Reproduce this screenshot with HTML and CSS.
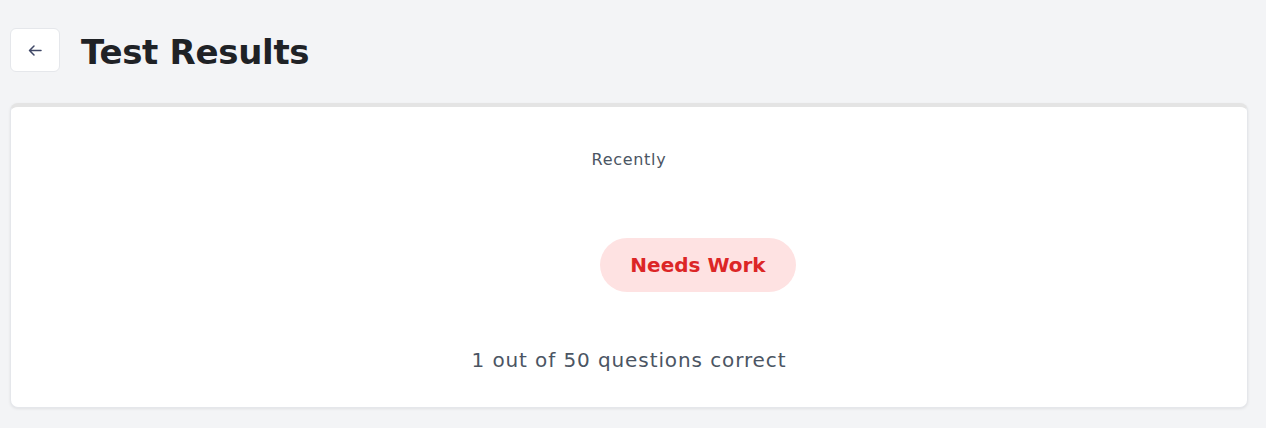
FILE: index.html
```html
<!DOCTYPE html>
<html lang="en">
<head>
<meta charset="utf-8">
<title>Test Results</title>
<link rel="stylesheet" href="styles.css">
</head>
<body>
  <header class="page-header">
    <button class="back-btn" aria-label="Back">
      <svg width="18" height="18" viewBox="0 0 18 18" fill="none" stroke="#3f4766" stroke-width="1.5" stroke-linecap="round" stroke-linejoin="round"><path d="M15 9.5H3.5M8 5L3.5 9.5 8 14"/></svg>
    </button>
    <h1 class="title">Test Results</h1>
  </header>
  <main class="card">
    <p class="recent">Recently</p>
    <div class="status-row">
      <span class="spacer"></span>
      <span class="pill">Needs Work</span>
    </div>
    <p class="score">1 out of 50 questions correct</p>
  </main>
</body>
</html>
```
FILE: styles.css
```css
* { box-sizing: border-box; }
html, body { margin: 0; }
body {
  background: #f3f4f6;
  font-family: "DejaVu Sans", "Noto Sans", sans-serif;
  padding: 28px 18px 20px 10px;
  color: #1f2937;
}
.page-header {
  display: flex;
  align-items: center;
  gap: 21px;
  height: 44px;
}
.back-btn {
  width: 50px;
  height: 44px;
  background: #ffffff;
  border: 1px solid #e5e7eb;
  border-radius: 6px;
  display: flex;
  align-items: center;
  justify-content: center;
  padding: 0;
}
.title {
  margin: 0;
  font-size: 34px;
  font-weight: 700;
  color: #1f2226;
  letter-spacing: -0.3px;
  line-height: 44px;
  position: relative;
  top: 2px;
}
.card {
  margin-top: 31px;
  background: #ffffff;
  border: 1px solid #e5e7eb;
  border-top: 4px solid #e4e4e4;
  border-radius: 8px;
  box-shadow: 0 1px 3px rgba(0,0,0,0.08);
  padding: 41px 0 33px;
  text-align: center;
}
.recent {
  margin: 0;
  font-size: 16px;
  line-height: 24px;
  letter-spacing: 0.7px;
  color: #4b5563;
}
.status-row {
  display: flex;
  justify-content: center;
  align-items: center;
  gap: 16px;
  margin-top: 66px;
}
.spacer { width: 122px; height: 1px; }
.pill {
  width: 196px;
  height: 54px;
  border-radius: 27px;
  background: #fee2e2;
  color: #dc2626;
  font-size: 20px;
  font-weight: 600;
  display: flex;
  align-items: center;
  justify-content: center;
}
.score {
  margin: 54px 0 0;
  font-size: 20px;
  line-height: 28px;
  letter-spacing: 0.9px;
  color: #4b5563;
}
```
